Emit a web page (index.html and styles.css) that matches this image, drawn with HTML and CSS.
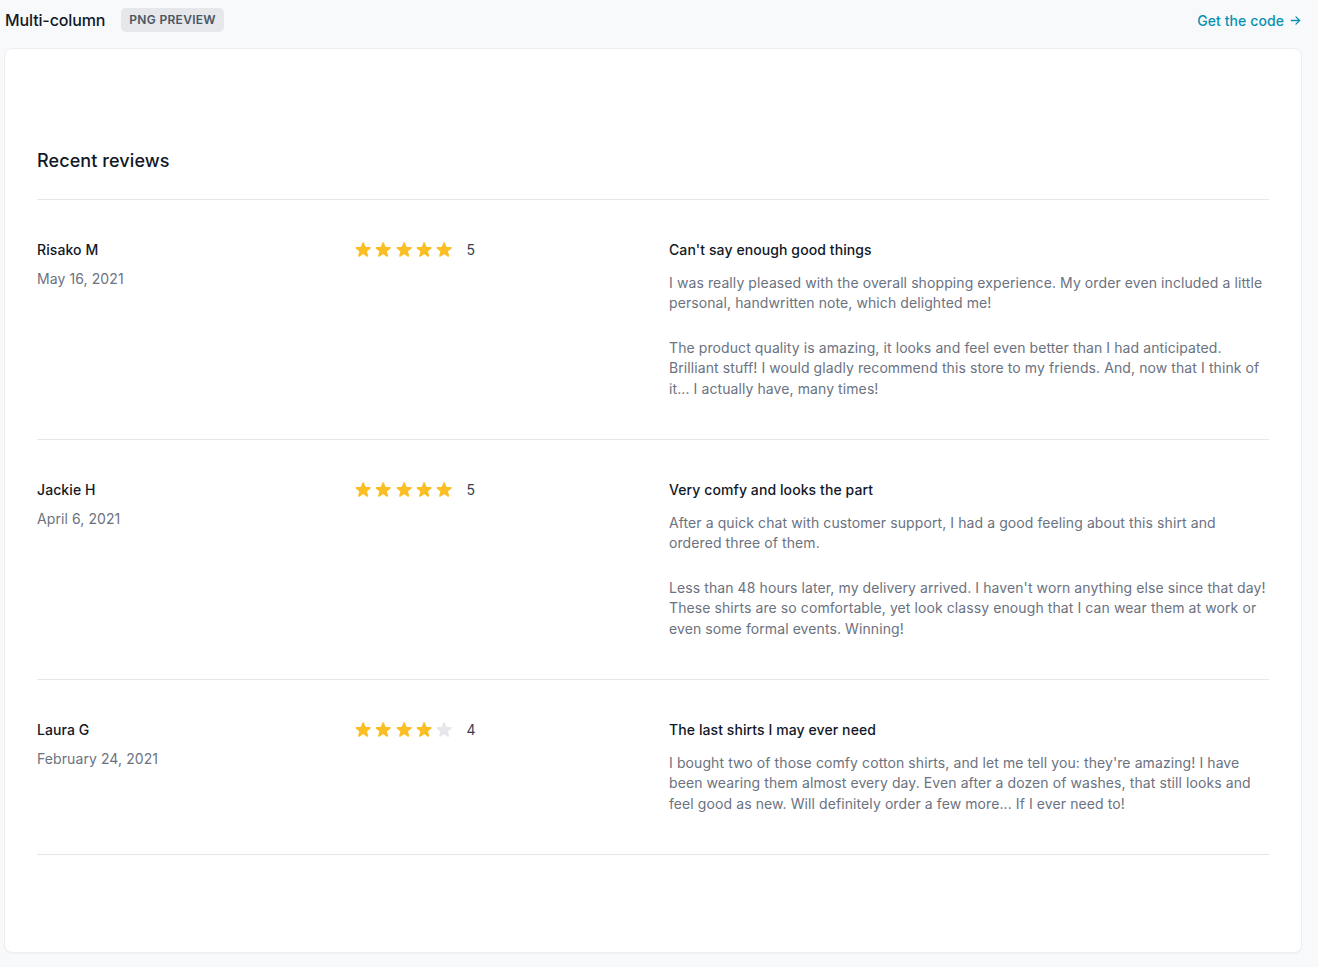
FILE: index.html
```
<!DOCTYPE html>
<html lang="en">
<head>
<meta charset="utf-8">
<title>Multi-column</title>
<link rel="stylesheet" href="styles.css">
</head>
<body>
<svg width="0" height="0" class="defs" aria-hidden="true">
  <defs>
    <symbol id="star" viewBox="0 0 20 20">
      <path d="M9.049 2.927c.3-.921 1.603-.921 1.902 0l1.07 3.292a1 1 0 00.95.69h3.462c.969 0 1.371 1.24.588 1.81l-2.8 2.034a1 1 0 00-.364 1.118l1.07 3.292c.3.921-.755 1.688-1.54 1.118l-2.8-2.034a1 1 0 00-1.175 0l-2.8 2.034c-.784.57-1.838-.197-1.539-1.118l1.07-3.292a1 1 0 00-.364-1.118L2.98 8.72c-.783-.57-.38-1.81.588-1.81h3.461a1 1 0 00.951-.69l1.07-3.292z"/>
    </symbol>
  </defs>
</svg>
<div class="page">
  <header class="topbar">
    <div class="topbar-left">
      <span class="title">Multi-column</span>
      <span class="badge">PNG PREVIEW</span>
    </div>
    <a class="code-link" href="#">Get the code
      <svg class="arrow" viewBox="0 0 12 12" aria-hidden="true"><path d="M1.5 6h9M6.5 2l4 4-4 4"/></svg>
    </a>
  </header>
  <main class="card">
    <div class="inner">
      <h2 class="heading">Recent reviews</h2>
      <div class="reviews">

        <div class="review">
          <div class="author">
            <p class="name">Risako M</p>
            <time class="date">May 16, 2021</time>
          </div>
          <div class="rating">
            <div class="stars">
              <svg class="star on"><use href="#star"/></svg>
              <svg class="star on"><use href="#star"/></svg>
              <svg class="star on"><use href="#star"/></svg>
              <svg class="star on"><use href="#star"/></svg>
              <svg class="star on"><use href="#star"/></svg>
            </div>
            <p class="score">5</p>
          </div>
          <div class="body">
            <h3 class="review-title">Can't say enough good things</h3>
            <div class="text">
              <p>I was really pleased with the overall shopping experience. My order even included a little personal, handwritten note, which delighted me!</p>
              <p>The product quality is amazing, it looks and feel even better than I had anticipated. Brilliant stuff! I would gladly recommend this store to my friends. And, now that I think of it... I actually have, many times!</p>
            </div>
          </div>
        </div>

        <div class="review">
          <div class="author">
            <p class="name">Jackie H</p>
            <time class="date">April 6, 2021</time>
          </div>
          <div class="rating">
            <div class="stars">
              <svg class="star on"><use href="#star"/></svg>
              <svg class="star on"><use href="#star"/></svg>
              <svg class="star on"><use href="#star"/></svg>
              <svg class="star on"><use href="#star"/></svg>
              <svg class="star on"><use href="#star"/></svg>
            </div>
            <p class="score">5</p>
          </div>
          <div class="body">
            <h3 class="review-title">Very comfy and looks the part</h3>
            <div class="text">
              <p>After a quick chat with customer support, I had a good feeling about this shirt and ordered three of them.</p>
              <p>Less than 48 hours later, my delivery arrived. I haven't worn anything else since that day! These shirts are so comfortable, yet look classy enough that I can wear them at work or even some formal events. Winning!</p>
            </div>
          </div>
        </div>

        <div class="review">
          <div class="author">
            <p class="name">Laura G</p>
            <time class="date">February 24, 2021</time>
          </div>
          <div class="rating">
            <div class="stars">
              <svg class="star on"><use href="#star"/></svg>
              <svg class="star on"><use href="#star"/></svg>
              <svg class="star on"><use href="#star"/></svg>
              <svg class="star on"><use href="#star"/></svg>
              <svg class="star off"><use href="#star"/></svg>
            </div>
            <p class="score">4</p>
          </div>
          <div class="body">
            <h3 class="review-title">The last shirts I may ever need</h3>
            <div class="text">
              <p>I bought two of those comfy cotton shirts, and let me tell you: they're amazing! I have been wearing them almost every day. Even after a dozen of washes, that still looks and feel good as new. Will definitely order a few more... If I ever need to!</p>
            </div>
          </div>
        </div>

      </div>
    </div>
  </main>
</div>
</body>
</html>
```

FILE: styles.css
```
* { box-sizing: border-box; }
html, body { margin: 0; padding: 0; }
body {
  background: #f8f9fb;
  font-family: Inter, "Noto Sans", "Liberation Sans", sans-serif;
  color: #111827;
  letter-spacing: 0.09px;
  -webkit-font-smoothing: antialiased;
}
.defs { position: absolute; width: 0; height: 0; overflow: hidden; }
.page {
  padding: 0 16px 15px 4px;
}
.topbar {
  height: 48px;
  display: flex;
  align-items: center;
  justify-content: space-between;
  padding: 0 1px 9px 1px;
}
.topbar-left {
  display: flex;
  align-items: center;
  gap: 16px;
}
.title {
  font-size: 16px;
  font-weight: 500;
  color: #111827;
  letter-spacing: -0.12px;
}
.badge {
  display: inline-block;
  background: #e5e7eb;
  color: #4b5563;
  font-size: 12px;
  font-weight: 600;
  line-height: 16px;
  padding: 4px 8px;
  border-radius: 5px;
  letter-spacing: 0.3px;
}
.code-link {
  display: flex;
  align-items: center;
  gap: 6px;
  color: #0891b2;
  font-size: 14px;
  font-weight: 500;
  text-decoration: none;
  padding-top: 1px;
}
.arrow {
  width: 11px;
  height: 11px;
  fill: none;
  stroke: #0891b2;
  stroke-width: 1.4;
  stroke-linecap: round;
  stroke-linejoin: round;
}
.card {
  background: #fff;
  border: 1px solid #eceef1;
  border-radius: 8px;
  box-shadow: 0 1px 1px rgba(0,0,0,0.03);
}
.inner {
  padding: 98px 32px 97px 32px;
}
.heading {
  margin: 0;
  font-size: 18px;
  line-height: 28px;
  font-weight: 500;
  color: #111827;
}
.reviews {
  margin-top: 24px;
  border-top: 1px solid #e5e7eb;
  border-bottom: 1px solid #e5e7eb;
  padding-bottom: 40px;
}
.review {
  display: grid;
  grid-template-columns: 284px 284px 1fr;
  column-gap: 32px;
  align-items: start;
  padding-top: 40px;
}
.review + .review {
  margin-top: 40px;
  border-top: 1px solid #e5e7eb;
}
.author {
  display: flex;
  flex-direction: column;
  font-size: 14px;
  line-height: 20.5px;
}
.name {
  margin: 0;
  font-weight: 500;
  color: #111827;
}
.date {
  margin-top: 8px;
  color: #6b7280;
}
.rating {
  display: flex;
  align-items: center;
}
.stars {
  display: flex;
  align-items: center;
}
.star {
  width: 20.3px;
  height: 20.3px;
  flex: none;
}
.star.on { fill: #fbbf24; }
.star.off { fill: #e5e7eb; }
.score {
  margin: 0 0 0 12px;
  font-size: 14px;
  line-height: 20px;
  color: #374151;
}
.review-title {
  margin: 0;
  font-size: 14px;
  line-height: 20.5px;
  font-weight: 500;
  color: #111827;
}
.text {
  margin-top: 12px;
  font-size: 14px;
  line-height: 20.5px;
  color: #6b7280;
  display: flex;
  flex-direction: column;
  gap: 24px;
}
.text p { margin: 0; }
```
